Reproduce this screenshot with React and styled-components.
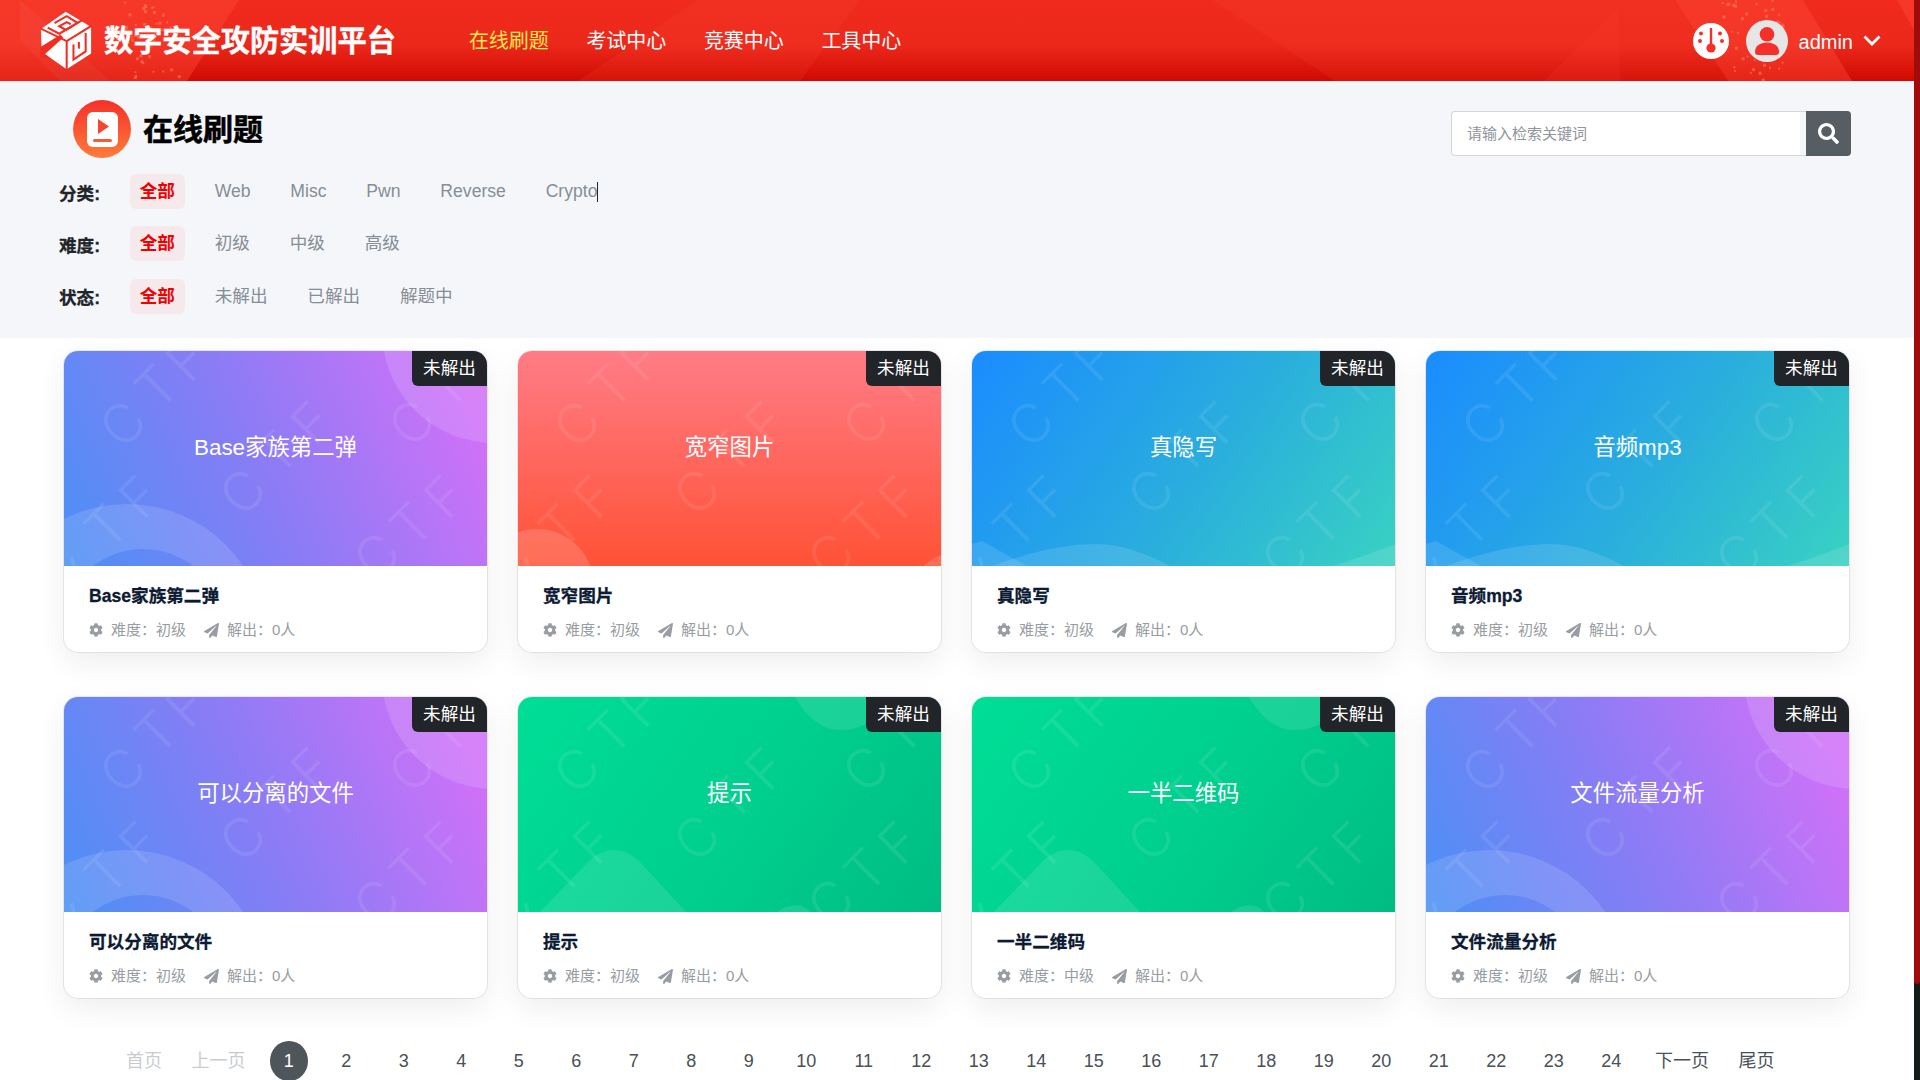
import React from 'react';
import styled, { createGlobalStyle } from 'styled-components';
import { FaCog, FaPaperPlane, FaSearch } from 'react-icons/fa';

const FONT = '"Liberation Sans", "Noto Sans CJK SC", sans-serif';

const GlobalStyle = createGlobalStyle`
  body {
    margin: 0;
    background: #fff;
    font-family: ${FONT};
  }
`;

const Shell = styled.div`
  display: flex;
  height: 100vh;
  overflow: hidden;
`;

const Page = styled.div`
  flex: 1;
  min-width: 0;
`;

// the page's red scrollbar
const ScrollRail = styled.div`
  flex: none;
  width: 6px;
  background: #141c1a;
`;

const ScrollThumb = styled.div`
  height: 984px;
  border-radius: 0 0 3px 3px;
  background: #a00c0c;
`;

const Header = styled.header`
  position: relative;
  height: 81px;
  display: flex;
  align-items: center;
  padding: 0 33px 0 40px;
  box-sizing: border-box;
  overflow: hidden;
  background: linear-gradient(180deg, #f02b1e 0%, #ec281b 55%, #d00a00 100%);
`;

const HeaderArt = styled.svg`
  position: absolute;
  left: 0;
  top: 0;
  width: 100%;
  height: 81px;
`;

const Brand = styled.div`
  position: relative;
  display: flex;
  align-items: center;
  gap: 12px;
  margin-top: -1px;
`;

const BrandName = styled.div`
  margin-top: -4px;
  color: #fff;
  font-size: 29.2px;
  font-weight: 700;
  white-space: nowrap;
  -webkit-text-stroke: 0.4px #fff;
`;

const Nav = styled.nav`
  position: relative;
  display: flex;
  gap: 37.5px;
  margin-left: 73px;
`;

const NavLink = styled.a`
  color: ${(p) => (p.$active ? '#ffe94d' : '#fff')};
  font-size: 20px;
  line-height: 28px;
`;

const UserArea = styled.div`
  position: relative;
  margin-left: auto;
  display: flex;
  align-items: center;
`;

const Avatar = styled.div`
  width: 42px;
  height: 42px;
  margin-left: 17px;
  border-radius: 50%;
  background: #e6e6e6;
  display: flex;
  align-items: center;
  justify-content: center;
`;

const UserName = styled.span`
  margin: 3px 0 0 11px;
  color: #fff;
  font-size: 20px;
`;

const Caret = styled.svg`
  margin-left: 10px;
`;

const FilterPanel = styled.section`
  height: 257px;
  box-sizing: border-box;
  padding: 19px 63px 0 59px;
  background: #f5f6fa;
`;

const PanelTop = styled.div`
  display: flex;
  justify-content: space-between;
  align-items: flex-start;
  margin-bottom: 16px;
`;

const PanelTitle = styled.div`
  display: flex;
  align-items: center;
  gap: 12px;
  padding-left: 14px;
`;

const TitleIcon = styled.div`
  width: 58px;
  height: 58px;
  border-radius: 50%;
  background: linear-gradient(180deg, #f5302a 0%, #ff7b3a 100%);
  display: flex;
  align-items: center;
  justify-content: center;
`;

const PanelHeading = styled.h1`
  margin: -5px 0 0;
  color: #000;
  font-size: 30px;
  font-weight: 700;
  -webkit-text-stroke: 0.5px #000;
`;

const SearchBox = styled.div`
  display: flex;
  width: 400px;
  height: 45px;
  margin-top: 11px;
`;

const SearchField = styled.div`
  flex: 1;
  box-sizing: border-box;
  padding-right: 6px;
  border: 1px solid #d3d6dc;
  border-right: none;
  border-radius: 4px 0 0 4px;
  background: #f5f6fa;
`;

const SearchInput = styled.input`
  width: 100%;
  height: 100%;
  box-sizing: border-box;
  padding: 0 15px;
  border: none;
  outline: none;
  border-radius: 4px 0 0 4px;
  background: #fff;
  font-family: ${FONT};
  font-size: 15px;
  &::placeholder { color: #8f959b; }
`;

const SearchButton = styled.button`
  width: 45px;
  border: none;
  padding: 0;
  border-radius: 0 4px 4px 0;
  background: #565d63;
  color: #fff;
  display: flex;
  align-items: center;
  justify-content: center;
`;

const FilterRows = styled.div`
  display: flex;
  flex-direction: column;
  gap: 17.4px;
`;

const FilterRow = styled.div`
  display: flex;
  align-items: center;
  height: 35px;
`;

const FilterLabel = styled.div`
  width: 70.7px;
  padding-top: 1.4px;
  color: #212529;
  font-size: 17.6px;
  font-weight: 700;
  -webkit-text-stroke: 0.3px #212529;
`;

const FilterOptions = styled.div`
  display: flex;
  gap: 19.8px;
`;

const FilterOption = styled.a`
  position: relative;
  padding: 0 10px;
  line-height: 35px;
  border-radius: 6px;
  font-size: 17.6px;
  font-weight: ${(p) => (p.$active ? 700 : 400)};
  color: ${(p) => (p.$active ? '#f00000' : '#868e96')};
  background: ${(p) => (p.$active ? '#f6e9ec' : 'transparent')};
  &::after {
    content: '';
    display: ${(p) => (p.$caret ? 'block' : 'none')};
    position: absolute;
    right: 9px;
    top: 8px;
    width: 1px;
    height: 20px;
    background: #212529;
  }
`;

const CardGrid = styled.div`
  display: grid;
  grid-template-columns: repeat(4, 423px);
  gap: 45px 31px;
  padding: 13px 64px 0;
`;

const Card = styled.article`
  height: 301px;
  border-radius: 14px;
  overflow: hidden;
  background: #fff;
  box-shadow: 0 0 0 1px rgba(0, 0, 0, 0.08), 0 10px 30px rgba(0, 0, 0, 0.07);
`;

const Cover = styled.div`
  position: relative;
  height: 215px;
  padding-bottom: 28px;
  box-sizing: border-box;
  overflow: hidden;
  background: ${(p) => p.$bg};
  display: flex;
  align-items: center;
  justify-content: center;
`;

const CoverArt = styled.svg`
  position: absolute;
  left: 0;
  top: 0;
`;

const CoverTitle = styled.div`
  position: relative;
  color: #fff;
  font-size: 22.4px;
`;

const Badge = styled.span`
  position: absolute;
  top: 0;
  right: 0;
  width: 75px;
  height: 35px;
  line-height: 35px;
  text-align: center;
  border-bottom-left-radius: 6px;
  background: #212529;
  color: #fff;
  font-size: 17.6px;
`;

const CardBody = styled.div`
  padding: 18px 25px 0;
`;

const CardTitle = styled.h3`
  margin: 0;
  color: #0c1a33;
  font-size: 17.6px;
  line-height: 24px;
  font-weight: 700;
  -webkit-text-stroke: 0.3px #0c1a33;
`;

const Meta = styled.div`
  display: flex;
  align-items: center;
  margin-top: 12px;
  color: #979da3;
  font-size: 15px;
  line-height: 20px;
`;

const MetaItem = styled.span`
  display: flex;
  align-items: center;
  gap: 8px;
  margin-right: 18px;
`;

const Pager = styled.div`
  display: flex;
  align-items: center;
  gap: 20px;
  padding: 43px 0 0 121px;
`;

const PageText = styled.a`
  padding: 0 4.5px 0 5px;
  font-size: 18px;
  line-height: 40px;
  color: ${(p) => (p.$muted ? '#c8ccd0' : '#495057')};
`;

const PageNum = styled.a`
  width: 37.5px;
  height: 40px;
  line-height: 40px;
  text-align: center;
  border-radius: 50%;
  font-size: 18px;
  color: ${(p) => (p.$active ? '#fff' : '#495057')};
  background: ${(p) => (p.$active ? '#4e565c' : 'transparent')};
`;

const PURPLE = 'linear-gradient(65deg, #4a90f5 0%, #8a7cf5 46%, #d071f8 92%)';
const RED = 'linear-gradient(180deg, #ff7c86 0%, #ff5236 100%)';
const BLUE = 'linear-gradient(125deg, #1a8cff 0%, #2aaedd 55%, #38d2c2 100%)';
const GREEN = 'linear-gradient(125deg, #00de96 0%, #00cd8c 60%, #00bc83 100%)';

const WATERMARK = [
  ['C', 59, 73], ['T', 93, 36], ['F', 123, 9],
  ['T', 43, 176], ['F', 76, 146],
  ['C', 179, 141], ['T', 213, 102], ['F', 248, 72],
  ['C', 348, 72], ['T', 383, 36],
  ['C', 313, 205], ['T', 348, 174], ['F', 381, 146],
  ['C', -8, 212],
];

const BLOBS = {
  purple: (
    <g fill="#fff" fillOpacity="0.13">
      <circle cx="430" cy="-20" r="112" />
      <path fillRule="evenodd" d="M-77 293a140 140 0 1 0 280 0a140 140 0 1 0 -280 0ZM-3 280a82 82 0 1 0 164 0a82 82 0 1 0 -164 0Z" />
    </g>
  ),
  red: (
    <g fill="#fff" fillOpacity="0.16">
      <circle cx="19" cy="235" r="57" />
      <circle cx="440" cy="250" r="49" />
    </g>
  ),
  blue: (
    <g fill="#fff" fillOpacity="0.12">
      <path d="M21 215C60 200 95 193 125 193C150 193 175 203 198 215Z" />
      <path d="M0 193L10 190L55 215H0Z" />
      <path d="M361 215C385 208 405 200 424 193V215Z" />
    </g>
  ),
  green: (
    <g fill="#fff" fillOpacity="0.1">
      <path d="M277 0C290 22 305 33 322 33C335 33 345 30 360 20V0Z" />
      <path d="M22 215L70 165C85 150 105 148 122 165L168 215Z" />
      <path d="M259 215C268 208 284 205 292 215Z" />
    </g>
  ),
};

const CoverDecor = ({ kind }) => (
  <CoverArt width="423" height="215" viewBox="0 0 423 215">
    {BLOBS[kind]}
    <g fill="#fff" fillOpacity="0.085" fontFamily="Inter, 'Liberation Sans', sans-serif" fontWeight="300" fontSize="54" textAnchor="middle">
      {WATERMARK.map(([ch, x, y]) => (
        <text key={`${ch}${x}`} x={x} y={y + 19} transform={`rotate(-45 ${x} ${y})`}>{ch}</text>
      ))}
    </g>
  </CoverArt>
);

// scattered dots in the header background
const particles = (cx, w, seed) => {
  const out = [];
  let s = seed;
  for (let i = 0; i < 46; i++) {
    s = (s * 9301 + 49297) % 233280;
    const x = cx + (s / 233280 - 0.5) * w;
    s = (s * 9301 + 49297) % 233280;
    const y = (s / 233280) * 81;
    s = (s * 9301 + 49297) % 233280;
    out.push([x + (y - 40) * 0.15, y, s % 2 ? 3 : 2]);
  }
  return out;
};

const Dots = [...particles(150, 48, 7), ...particles(1755, 60, 31)];

const HeaderDecor = () => (
  <HeaderArt viewBox="0 0 1914 81" preserveAspectRatio="none">
    <g fill="#ff4a3a" fillOpacity="0.42">
      <path d="M0 0H239L187 81H0Z" />
      <path d="M1675 0H1803L1852 81H1728Z" />
      <path d="M1897 0H1914V30Z" />
    </g>
    <g fill="#ff4a3a" fillOpacity="0.16">
      <path d="M1212 0H1675L1728 81H1335Z" />
      <path d="M698 0L578 81H800L860 0Z" />
    </g>
    <path d="M1618 8L1620 81H1544Z" fill="#ff4a3a" fillOpacity="0.14" />
    <path d="M20 0L110 81H60L20 40Z" fill="#fff" fillOpacity="0.04" />
    <g fill="#ff7a55" fillOpacity="0.6">
      {Dots.map(([x, y, r], i) => (
        <rect key={i} x={x} y={y} width={r} height={r} />
      ))}
    </g>
  </HeaderArt>
);

const Logo = () => (
  <svg width="52" height="59" viewBox="62 35 152 174">
    <path d="M137 37L205 78L212 82V160L140 207L66 155L64 88Z" fill="#fff" />
    <g fill="none" stroke="#f32c22" strokeWidth="6">
      <path d="M62 86L140 124L214 78" />
      <path d="M140 124V209" />
      <path d="M104 71L140 50L172 70L138 91L118 80L140 68L152 74" />
      <path d="M84 84L118 102L186 62" />
      <path d="M160 134V178L196 154V100" />
      <path d="M176 126V146" />
    </g>
    <path d="M62 142L122 104L130 114L76 162L94 176L62 172Z" fill="#f32c22" />
  </svg>
);

const Gauge = () => (
  <svg width="36" height="36" viewBox="0 0 36 36">
    <circle cx="18" cy="18" r="18" fill="#fff" />
    <g fill="#f5302a">
      <rect x="16.8" y="5" width="2.4" height="20" />
      <circle cx="18" cy="25" r="4.6" />
      <circle cx="8" cy="10.5" r="2" />
      <circle cx="27" cy="10.5" r="2" />
      <circle cx="7" cy="18" r="2" />
      <circle cx="29" cy="18" r="2" />
    </g>
  </svg>
);

const UserIcon = () => (
  <svg width="24" height="28" viewBox="0 0 24 28">
    <g fill="#f5302a">
      <circle cx="12" cy="7.3" r="7.3" />
      <path d="M0 25C0 19 5 15.5 12 15.5C19 15.5 24 19 24 25C24 27 23 28 21 28H3C1 28 0 27 0 25Z" />
    </g>
  </svg>
);

const PlayBadge = () => (
  <svg width="31" height="35" viewBox="0 0 31 35">
    <rect width="31" height="35" rx="6" fill="#fff" />
    <path d="M11 7L22 14.5L11 22Z" fill="#f8452f" />
    <rect x="6" y="27" width="19" height="3" rx="1.5" fill="#fa5b33" />
  </svg>
);

const FILTERS = [
  { label: '分类:', items: ['全部', 'Web', 'Misc', 'Pwn', 'Reverse', 'Crypto'] },
  { label: '难度:', items: ['全部', '初级', '中级', '高级'] },
  { label: '状态:', items: ['全部', '未解出', '已解出', '解题中'] },
];

const CARDS = [
  { title: 'Base家族第二弹', kind: 'purple', bg: PURPLE, level: '初级' },
  { title: '宽窄图片', kind: 'red', bg: RED, level: '初级' },
  { title: '真隐写', kind: 'blue', bg: BLUE, level: '初级' },
  { title: '音频mp3', kind: 'blue', bg: BLUE, level: '初级' },
  { title: '可以分离的文件', kind: 'purple', bg: PURPLE, level: '初级' },
  { title: '提示', kind: 'green', bg: GREEN, level: '初级' },
  { title: '一半二维码', kind: 'green', bg: GREEN, level: '中级' },
  { title: '文件流量分析', kind: 'purple', bg: PURPLE, level: '初级' },
];

const PAGES = Array.from({ length: 24 }, (_, i) => i + 1);

export default function App() {
  return (
    <Shell>
      <GlobalStyle />
      <Page>
        <Header>
          <HeaderDecor />
          <Brand>
            <Logo />
            <BrandName>数字安全攻防实训平台</BrandName>
          </Brand>
          <Nav>
            <NavLink $active>在线刷题</NavLink>
            <NavLink>考试中心</NavLink>
            <NavLink>竞赛中心</NavLink>
            <NavLink>工具中心</NavLink>
          </Nav>
          <UserArea>
            <Gauge />
            <Avatar><UserIcon /></Avatar>
            <UserName>admin</UserName>
            <Caret width="18" height="12" viewBox="0 0 18 12">
              <path d="M1.5 1.5L9 9L16.5 1.5" fill="none" stroke="#fff" strokeWidth="2.8" />
            </Caret>
          </UserArea>
        </Header>

        <FilterPanel>
          <PanelTop>
            <PanelTitle>
              <TitleIcon><PlayBadge /></TitleIcon>
              <PanelHeading>在线刷题</PanelHeading>
            </PanelTitle>
            <SearchBox>
              <SearchField>
                <SearchInput placeholder="请输入检索关键词" />
              </SearchField>
              <SearchButton><FaSearch size={21} /></SearchButton>
            </SearchBox>
          </PanelTop>
          <FilterRows>
            {FILTERS.map((row) => (
              <FilterRow key={row.label}>
                <FilterLabel>{row.label}</FilterLabel>
                <FilterOptions>
                  {row.items.map((item, i) => (
                    <FilterOption key={item} $active={i === 0} $caret={item === 'Crypto'}>{item}</FilterOption>
                  ))}
                </FilterOptions>
              </FilterRow>
            ))}
          </FilterRows>
        </FilterPanel>

        <CardGrid>
          {CARDS.map((card) => (
            <Card key={card.title}>
              <Cover $bg={card.bg}>
                <CoverDecor kind={card.kind} />
                <CoverTitle>{card.title}</CoverTitle>
                <Badge>未解出</Badge>
              </Cover>
              <CardBody>
                <CardTitle>{card.title}</CardTitle>
                <Meta>
                  <MetaItem><FaCog size={14} />难度：{card.level}</MetaItem>
                  <MetaItem><FaPaperPlane size={15} />解出：0人</MetaItem>
                </Meta>
              </CardBody>
            </Card>
          ))}
        </CardGrid>

        <Pager>
          <PageText $muted>首页</PageText>
          <PageText $muted>上一页</PageText>
          {PAGES.map((n) => (
            <PageNum key={n} $active={n === 1}>{n}</PageNum>
          ))}
          <PageText>下一页</PageText>
          <PageText>尾页</PageText>
        </Pager>
      </Page>
      <ScrollRail><ScrollThumb /></ScrollRail>
    </Shell>
  );
}
